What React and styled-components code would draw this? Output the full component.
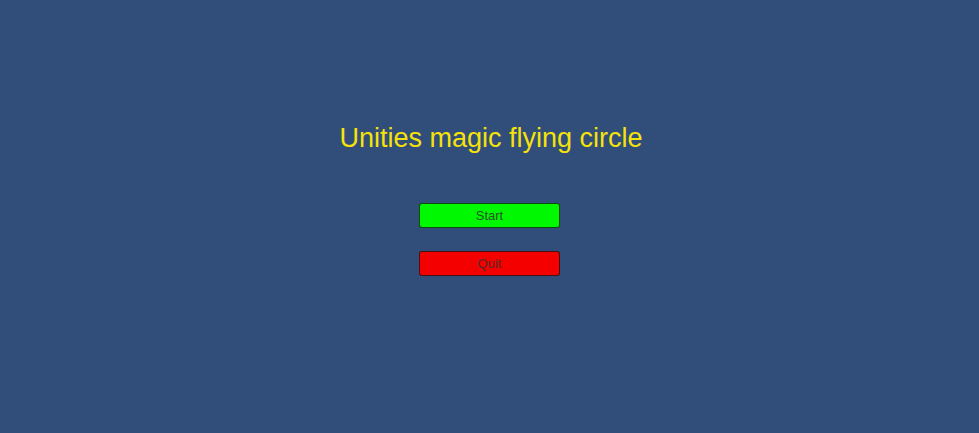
import React from "react"
import styled, { createGlobalStyle } from "styled-components"

const Global = createGlobalStyle`
  html, body {
    margin: 0;
    padding: 0;
    background: #314d79;
  }
`

const Screen = styled.div`
  height: 100vh;
  display: flex;
  flex-direction: column;
  align-items: center;
  padding-top: 122px;
  box-sizing: border-box;
  font-family: "Liberation Sans", Arial, sans-serif;
`

const Title = styled.h1`
  margin: 0 0 0 3px;
  font-size: 27px;
  line-height: 32px;
  font-weight: normal;
  color: #f5e20a;
`

const Menu = styled.div`
  display: flex;
  flex-direction: column;
  gap: 23px;
  margin-top: 49px;
`

const MenuButton = styled.button`
  width: 141px;
  height: 25px;
  padding: 0;
  border: 1px solid rgba(20, 20, 20, 0.75);
  border-radius: 3px;
  background: ${(p) => p.$color};
  color: rgba(50, 50, 50, 0.85);
  font-family: "Liberation Sans", Arial, sans-serif;
  font-size: 13px;
  cursor: pointer;
`

export default function App() {
  return (
    <>
      <Global />
      <Screen>
        <Title>Unities magic flying circle</Title>
        <Menu>
          <MenuButton $color="#00f800">Start</MenuButton>
          <MenuButton $color="#f40000">Quit</MenuButton>
        </Menu>
      </Screen>
    </>
  )
}
